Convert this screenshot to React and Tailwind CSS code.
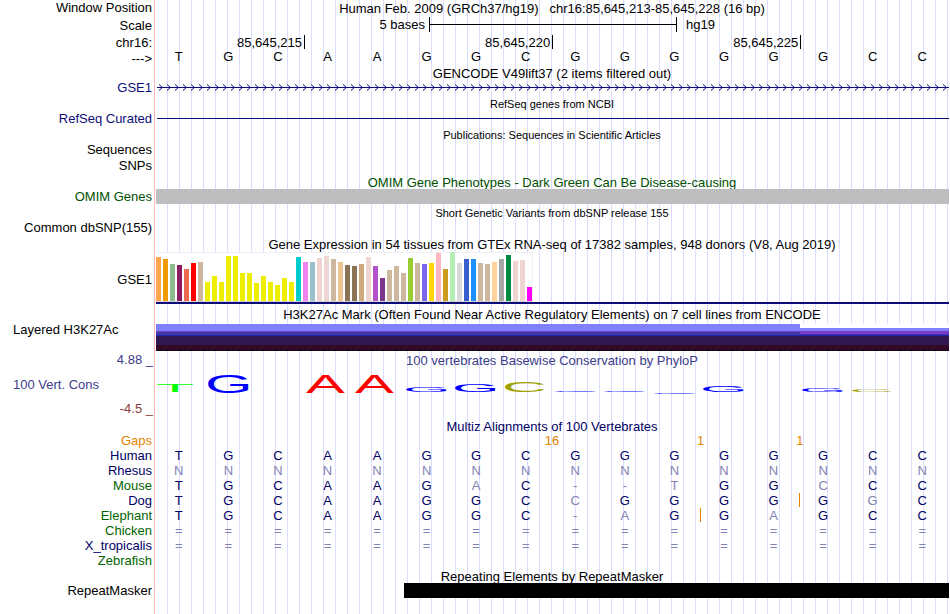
import React from "react";

const TISSUES = [
  [44, "#ffa54f"], [42, "#ee9a00"], [37, "#8fbc8f"], [36, "#8b1c62"], [32, "#ee6a50"], [38, "#ff0000"],
  [39, "#cdb79e"], [19, "#eeee00"], [25, "#eeee00"], [19, "#eeee00"], [45, "#eeee00"], [45, "#eeee00"],
  [28, "#eeee00"], [28, "#eeee00"], [18, "#eeee00"], [25, "#eeee00"], [19, "#eeee00"], [16, "#eeee00"],
  [23, "#eeee00"], [19, "#eeee00"], [44, "#00cdcd"], [39, "#ee82ee"], [39, "#9ac0cd"], [43, "#eed5d2"],
  [45, "#eed5d2"], [42, "#cdb79e"], [39, "#eec591"], [36, "#8b7355"], [35, "#8b7355"], [37, "#cdaa7d"],
  [44, "#eed5d2"], [35, "#b452cd"], [23, "#7a378b"], [31, "#cdb79e"], [35, "#cdb79e"], [28, "#cdb79e"],
  [43, "#9acd32"], [38, "#cdb79e"], [37, "#7a67ee"], [38, "#ffd700"], [48, "#ffb6c1"], [32, "#cd9b1d"],
  [49, "#b4eeb4"], [38, "#d9d9d9"], [42, "#3a5fcd"], [42, "#1e90ff"], [38, "#cdb79e"], [37, "#cdb79e"],
  [39, "#ffd39b"], [42, "#a6a6a6"], [46, "#008b45"], [40, "#eed5d2"], [41, "#eed5d2"], [14, "#ff00ff"],
];

// Each base of the conservation logo: letter, distance from the track top, height.
const LOGO = [
  ["T", 16, 8], ["G", 7, 18], null, ["A", 7, 18], ["A", 7, 18], ["G", 19, 5], ["G", 16, 8], ["C", 14, 10],
  ["G", 23, 1], ["G", 23, 1], ["G", 25, 1], ["G", 17, 7], null, ["G", 20, 4], ["C", 22, 2], null,
];

const GLYPHS = {
  A: { box: "0 -69 67 69", cls: "ml-[3px] w-[39px] fill-[#ff0000]" },
  C: { box: "5 -70 63 71", cls: "ml-[4px] w-[39px] fill-[#a0a000]" },
  G: { box: "5 -70 67 71", cls: "ml-[4px] w-[41px] fill-[#0000ff]" },
  T: { box: "2 -69 57 69", cls: "ml-[3px] w-[36px] fill-[#00ff00]" },
};

// Lower-case letters are bases that differ from the human sequence.
const SPECIES = [
  { name: "Human", seq: "TGCAAGGCGGGGGGCC", cls: "text-[#000064]" },
  { name: "Rhesus", seq: "nnnnnnnnnnnnnnnn", cls: "text-[#000064]" },
  { name: "Mouse", seq: "TGCAAGaC--tGGcCC", cls: "text-[#006400]" },
  { name: "Dog", seq: "TGCAAGGCcGGGGGgC", cls: "text-[#000064]", gapAfter: 12 },
  { name: "Elephant", seq: "TGCAAGGC-aGGaGCC", cls: "text-[#006400]", gapAfter: 10 },
  { name: "Chicken", seq: "================", cls: "text-[#006400]" },
  { name: "X_tropicalis", seq: "================", cls: "text-[#000064]" },
  { name: "Zebrafish", seq: "                ", cls: "text-[#006400]" },
];

function Row({ label = "", h = "h-4", labelCls = "pb-px", children, trackCls = "" }) {
  return (
    <div className={`flex ${h}`}>
      <div className={`flex w-[155px] shrink-0 items-center justify-end pr-[3px] ${labelCls}`}>{label}</div>
      <div className={`min-w-0 flex-1 ${trackCls}`}>{children}</div>
    </div>
  );
}

function Title({ h = "h-4", label, cls = "text-[13px]", children }) {
  return (
    <Row h={h} label={label} trackCls={`flex items-center justify-center whitespace-pre ${cls}`}>
      {children}
    </Row>
  );
}

function Bands({ cls, parts }) {
  return (
    <div className={`flex flex-col ${cls}`}>
      {parts.map((p, i) => (
        <div key={i} className={p} />
      ))}
    </div>
  );
}

export default function App() {
  return (
    <main className="min-h-screen bg-white bg-[linear-gradient(#ffb4b4,#ffb4b4),repeating-linear-gradient(to_right,#dcdcff_0_1px,transparent_1px_12px)] bg-[position:154px_0,167px_0] bg-[size:1px_100%,100%_100%] bg-no-repeat pr-px font-['Liberation_Sans',Arial,sans-serif] text-[13px] leading-[15px] text-black">
      <Title label="Window Position">{"Human Feb. 2009 (GRCh37/hg19)   chr16:85,645,213-85,645,228 (16 bp)"}</Title>
      <Row h="h-[17px]" label="Scale" labelCls="pt-px" trackCls="flex items-center">
        <span className="w-[34.5%] pr-1 text-right">5 bases</span>
        <span className="flex h-[15px] w-[31.25%] items-center border-x border-black">
          <span className="h-px w-full bg-black" />
        </span>
        <span className="pl-[9px]">hg19</span>
      </Row>
      <Row h="h-[17px]" label="chr16:" labelCls="pt-px" trackCls="flex items-center">
        <span className="h-[14px] w-[18.9%] border-r border-black pr-[2px] text-right">85,645,215</span>
        <span className="h-[14px] w-[31.25%] border-r border-black pr-[2px] text-right">85,645,220</span>
        <span className="h-[14px] w-[31.25%] border-r border-black pr-[2px] text-right">85,645,225</span>
      </Row>
      <Row label="--->" labelCls="" trackCls="-ml-px grid grid-cols-16 pr-[2px] text-center leading-[13px]">
        {"TGCAAGGCGGGGGGCC".split("").map((b, i) => (
          <span key={i}>{b}</span>
        ))}
      </Row>
      <Title h="h-[15px]">GENCODE V49lift37 (2 items filtered out)</Title>
      <Row h="h-[15px]" label="GSE1" labelCls="pb-[2px] text-[#0c0c78]" trackCls="pl-[2px]">
        <svg className="block h-[15px] w-full" aria-hidden="true">
          <defs>
            <pattern id="strand" width="8" height="15" patternUnits="userSpaceOnUse">
              <path d="M2 3.5 L5.5 6.5 L2 9.5" fill="none" stroke="#0c0c78" strokeWidth="1" />
            </pattern>
          </defs>
          <rect width="100%" height="15" fill="url(#strand)" />
          <rect y="6" width="100%" height="1" fill="#0c0c78" />
        </svg>
      </Row>
      <Title h="h-[15px]" cls="pt-[2px] text-[11px]">RefSeq genes from NCBI</Title>
      <Row h="h-[15px]" label="RefSeq Curated" labelCls="text-[#0c0c78]" trackCls="flex items-center pl-[2px]">
        <div className="h-px w-full bg-[#0c0c78]" />
      </Row>
      <Title cls="pt-[2px] text-[11px]">Publications: Sequences in Scientific Articles</Title>
      <Row label="Sequences" />
      <Row label="SNPs" />
      <Title h="h-[15px]" cls="pt-[2px] text-[13px] text-[#005000]">OMIM Gene Phenotypes - Dark Green Can Be Disease-causing</Title>
      <Row h="h-[15px]" label="OMIM Genes" labelCls="text-[#005000]" trackCls="pl-px">
        <div className="h-full bg-[#bebebe]" />
      </Row>
      <Title cls="pt-[2px] text-[11px]">Short Genetic Variants from dbSNP release 155</Title>
      <Row label="Common dbSNP(155)" />
      <Title>Gene Expression in 54 tissues from GTEx RNA-seq of 17382 samples, 948 donors (V8, Aug 2019)</Title>
      <Row h="h-[52px]" label="GSE1" labelCls="pt-[2px]" trackCls="flex flex-col pl-px">
        <div className="flex h-[50px] items-end gap-[2px] self-start border-y border-r border-t-[#f0f0f0] border-r-[#f0f0f0] border-b-[#d2d2d2] bg-white">
          {TISSUES.map(([height, color], i) => (
            <div key={i} className="w-[5px] shrink-0" style={{ height, backgroundColor: color }} />
          ))}
        </div>
        <div className="h-[2px] bg-[#0c0c78]" />
      </Row>
      <Title h="h-5">H3K27Ac Mark (Often Found Near Active Regulatory Elements) on 7 cell lines from ENCODE</Title>
      <div className="flex h-[27px]">
        <div className="w-[155px] shrink-0 pl-[13px] leading-[11px]">Layered H3K27Ac</div>
        <div className="flex flex-1 pl-px">
          <Bands
            cls="w-[81.2%]"
            parts={["h-[7px] bg-[#8080ff]", "h-px bg-[#7a3cc8]", "h-[3px] bg-[#3c3ca0]", "h-px bg-[#281eb4]", "h-[9px] bg-[#321850]", "h-[5px] bg-[#320a28]", "h-px bg-[#140514]"]}
          />
          <Bands
            cls="flex-1"
            parts={["h-1 bg-white", "h-[3px] bg-[#8080ff]", "h-[3px] bg-[#7a3cc8]", "h-px bg-[#3c3ca0]", "h-px bg-[#281eb4]", "h-[9px] bg-[#321850]", "h-[5px] bg-[#320a28]", "h-px bg-[#140514]"]}
          />
        </div>
      </div>
      <div className="flex h-[67px] text-[#3c3c8c]">
        <div className="flex w-[155px] shrink-0 flex-col justify-between pr-[2px] pb-[2px]">
          <span className="pt-px text-right">4.88 _</span>
          <span className="pl-[13px]">100 Vert. Cons</span>
          <span className="text-right text-[#8c3c3c]">-4.5 _</span>
        </div>
        <div className="flex-1">
          <div className="flex h-[17px] items-center justify-center pt-[2px]">100 vertebrates Basewise Conservation by PhyloP</div>
          <div className="-ml-px grid h-[50px] grid-cols-16 pr-[2px]">
            {LOGO.map((entry, i) => (
              <div key={i}>
                {entry && (
                  <svg
                    className={`block overflow-visible ${GLYPHS[entry[0]].cls}`}
                    style={{ marginTop: entry[1], height: entry[2] }}
                    viewBox={GLYPHS[entry[0]].box}
                    preserveAspectRatio="none"
                  >
                    <text fontSize="100">{entry[0]}</text>
                  </svg>
                )}
              </div>
            ))}
          </div>
        </div>
      </div>
      <Title h="h-[15px]" cls="pt-[2px] text-[13px] text-[#000064]">Multiz Alignments of 100 Vertebrates</Title>
      <table className="w-[calc(100%-2px)] table-fixed border-collapse text-center">
        <colgroup>
          <col className="w-[154px]" />
          {LOGO.map((_, i) => (
            <col key={i} />
          ))}
        </colgroup>
        <tbody>
          <tr className="h-[15px] text-[#e68200]">
            <th scope="row" className="p-0 pr-[2px] text-right font-normal">Gaps</th>
            <td colSpan={7} className="p-0" />
            <td colSpan={2} className="p-0 pl-[3px]">16</td>
            <td className="p-0" />
            <td colSpan={2} className="p-0 pl-[3px]">1</td>
            <td colSpan={2} className="p-0 pl-[3px]">1</td>
            <td colSpan={2} className="p-0" />
          </tr>
          {SPECIES.map((s) => (
            <tr key={s.name} className="h-[15px]">
              <th scope="row" className={`p-0 pr-[2px] text-right font-normal ${s.cls}`}>{s.name}</th>
              {s.seq.split("").map((b, i) => (
                <td key={i} className={`relative p-0 ${/[A-Z]/.test(b) ? "text-[#000064]" : "text-[#8282b4]"}`}>
                  {b.toUpperCase()}
                  {s.gapAfter === i && <span className="absolute -right-[2px] top-0 h-[14px] w-px bg-[#e68200]" />}
                </td>
              ))}
            </tr>
          ))}
        </tbody>
      </table>
      <Title h="h-[15px]" cls="pt-[2px] text-[13px]">Repeating Elements by RepeatMasker</Title>
      <Row h="h-[15px]" label="RepeatMasker" labelCls="" trackCls="flex justify-end">
        <div className="h-full w-[68.7%] bg-black" />
      </Row>
    </main>
  );
}
